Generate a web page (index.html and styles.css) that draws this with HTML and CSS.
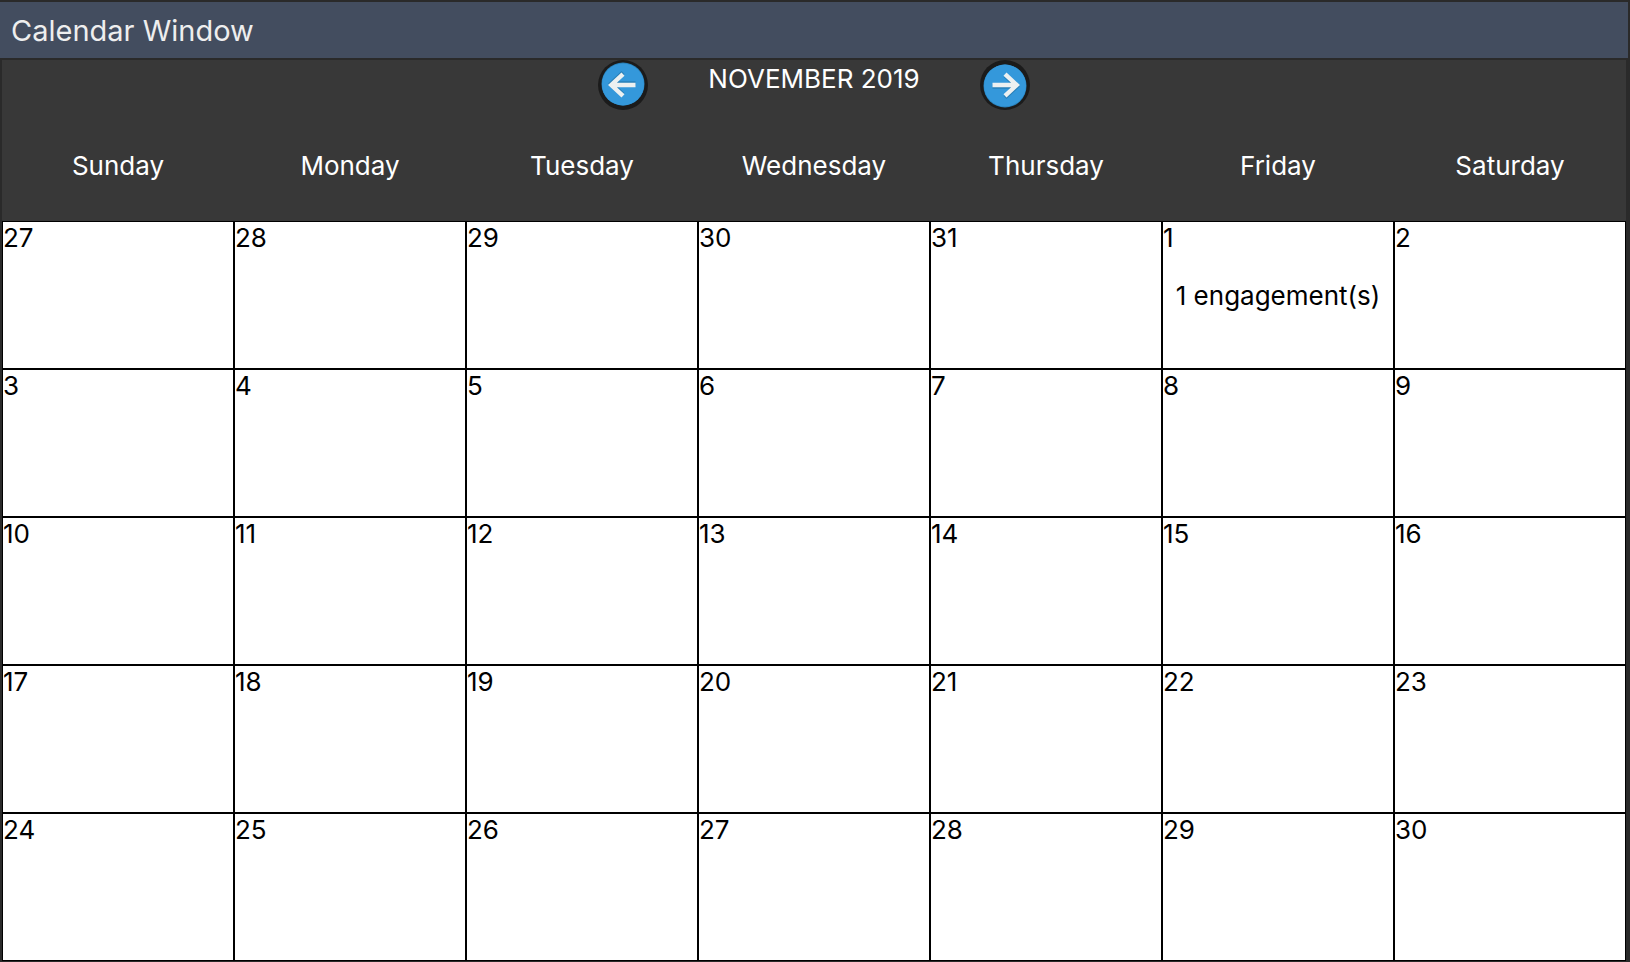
FILE: index.html
```
<!DOCTYPE html>
<html lang="en">
<head>
<meta charset="utf-8">
<title>Calendar Window</title>
<link rel="stylesheet" href="styles.css">
</head>
<body>
<div class="window">
  <header class="titlebar"><h1 class="title">Calendar Window</h1></header>
  <main class="content">
    <nav class="month-nav">
      <button class="nav-button" type="button" aria-label="Previous month">
        <svg class="arrow arrow-back" viewBox="0 0 50 50" aria-hidden="true">
          <circle class="ring" cx="25" cy="25" r="25"/>
          <circle class="rim" cx="25" cy="26" r="21.5"/>
          <circle class="disc" cx="25" cy="25.6" r="21"/>
          <path class="shade" d="M12.5 26.5H36M25 15.5L36.7 26.5L25 37.5"/>
          <path class="stroke" d="M12.5 25H36M25 14.2L36.7 25L25 35.8"/>
        </svg>
      </button>
      <h2 class="month">NOVEMBER 2019</h2>
      <button class="nav-button" type="button" aria-label="Next month">
        <svg class="arrow" viewBox="0 0 50 50" aria-hidden="true">
          <circle class="ring" cx="25" cy="25" r="25"/>
          <circle class="rim" cx="25" cy="26" r="21.5"/>
          <circle class="disc" cx="25" cy="25.6" r="21"/>
          <path class="shade" d="M12.5 26.5H36M25 15.5L36.7 26.5L25 37.5"/>
          <path class="stroke" d="M12.5 25H36M25 14.2L36.7 25L25 35.8"/>
        </svg>
      </button>
    </nav>
    <table class="calendar">
      <thead>
        <tr><th scope="col">Sunday</th><th scope="col">Monday</th><th scope="col">Tuesday</th><th scope="col">Wednesday</th><th scope="col">Thursday</th><th scope="col">Friday</th><th scope="col">Saturday</th></tr>
      </thead>
      <tbody>
        <tr><td>27</td><td>28</td><td>29</td><td>30</td><td>31</td><td>1<p class="event">1 engagement(s)</p></td><td>2</td></tr>
        <tr><td>3</td><td>4</td><td>5</td><td>6</td><td>7</td><td>8</td><td>9</td></tr>
        <tr><td>10</td><td>11</td><td>12</td><td>13</td><td>14</td><td>15</td><td>16</td></tr>
        <tr><td>17</td><td>18</td><td>19</td><td>20</td><td>21</td><td>22</td><td>23</td></tr>
        <tr><td>24</td><td>25</td><td>26</td><td>27</td><td>28</td><td>29</td><td>30</td></tr>
      </tbody>
    </table>
  </main>
</div>
</body>
</html>
```
FILE: styles.css
```
* {
  box-sizing: border-box;
}

body {
  margin: 0;
  background: #2a2a2a;
  color: #fff;
  font-family: Inter, "Liberation Sans", sans-serif;
  font-size: 26px;
  line-height: 32px;
}

.window {
  padding: 2px 2px 1px 0;
}

.titlebar {
  padding: 11px 11px 9px;
  background: #434d5f;
  color: #eee;
}

.title {
  margin: 0;
  font-size: 29px;
  font-weight: 400;
  line-height: 36px;
}

.content {
  margin: 2px 2px 0;
  background: #383838;
}

.month-nav {
  display: flex;
  justify-content: center;
  align-items: flex-start;
  gap: 60px;
}

.nav-button {
  padding: 0;
  border: 0;
  background: none;
  cursor: pointer;
}

.arrow {
  display: block;
  width: 50px;
  height: 50px;
}

.arrow-back {
  transform: rotate(180deg);
}

.ring {
  fill: #1b1b1b;
}

.rim {
  fill: #2980b9;
}

.disc {
  fill: #3498db;
}

.shade,
.stroke {
  fill: none;
  stroke-width: 4.4;
}

.shade {
  stroke: #2980b9;
}

.stroke {
  stroke: #ecf0f1;
}

.month {
  margin: 0;
  padding-top: 3px;
  font-size: 26px;
  font-weight: 400;
}

.calendar {
  width: 100%;
  border-spacing: 0;
  table-layout: fixed;
}

.calendar th {
  height: 111px;
  padding: 0;
  font-weight: 400;
}

.calendar td {
  height: 148px;
  padding: 0;
  border: 1px solid #000;
  background: #fff;
  color: #000;
  vertical-align: top;
}

.event {
  margin: 26px 0 0;
  text-align: center;
}
```
